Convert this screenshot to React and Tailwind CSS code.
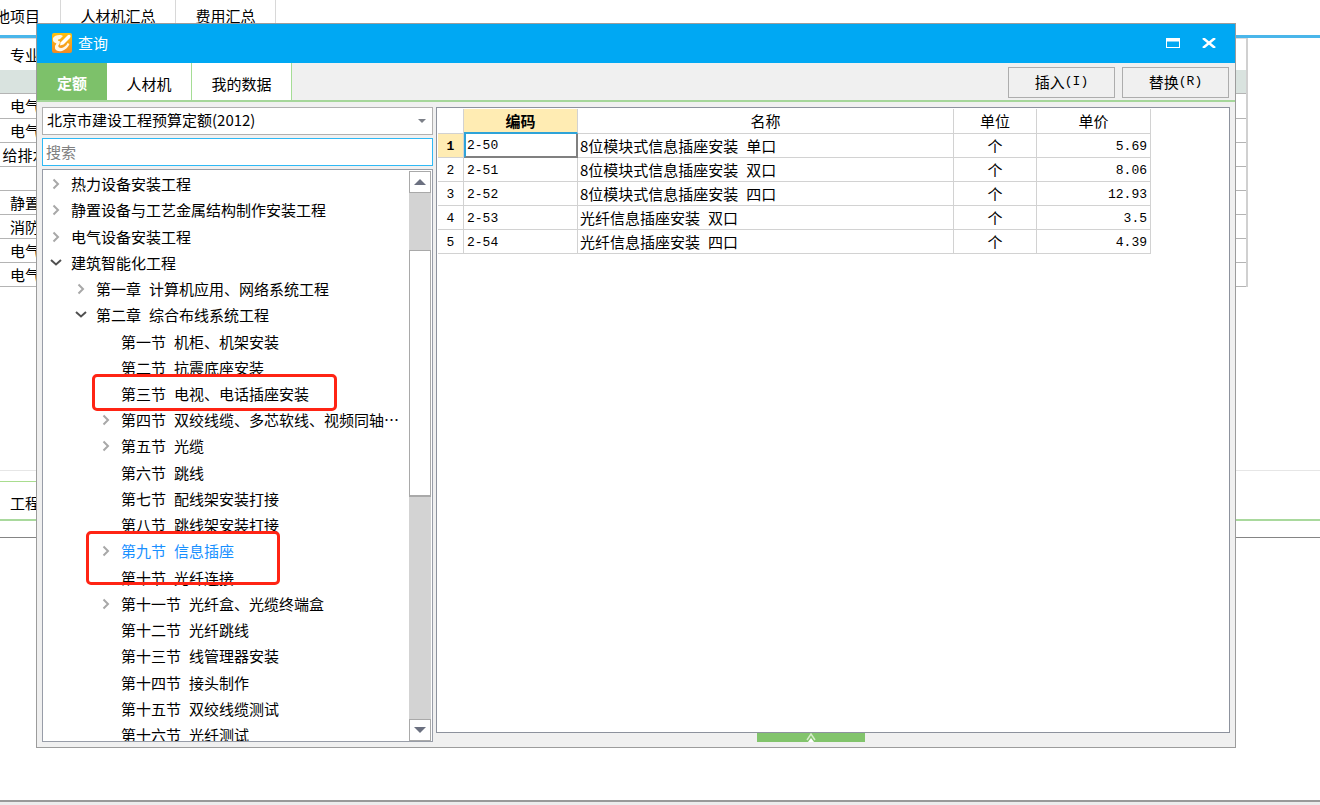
import { useState } from 'react';
import clsx from 'clsx';

const sheetTabs = [
  { name: '其他项目', width: 'w-[61px] justify-end pr-5' },
  { name: '人材机汇总', width: 'w-[115px] justify-center' },
  { name: '费用汇总', width: 'w-[100px] justify-center' },
];

const majors = ['电气', '电气', '给排水', '', '静置', '消防', '电气', '电气'];

const treeItems = [
  { level: 0, icon: 'closed', title: '热力设备安装工程' },
  { level: 0, icon: 'closed', title: '静置设备与工艺金属结构制作安装工程' },
  { level: 0, icon: 'closed', title: '电气设备安装工程' },
  { level: 0, icon: 'open', title: '建筑智能化工程' },
  { level: 1, icon: 'closed', no: '第一章', title: '计算机应用、网络系统工程' },
  { level: 1, icon: 'open', no: '第二章', title: '综合布线系统工程' },
  { level: 2, no: '第一节', title: '机柜、机架安装' },
  { level: 2, no: '第二节', title: '抗震底座安装' },
  { level: 2, no: '第三节', title: '电视、电话插座安装' },
  { level: 2, icon: 'closed', no: '第四节', title: '双绞线缆、多芯软线、视频同轴…' },
  { level: 2, icon: 'closed', no: '第五节', title: '光缆' },
  { level: 2, no: '第六节', title: '跳线' },
  { level: 2, no: '第七节', title: '配线架安装打接' },
  { level: 2, no: '第八节', title: '跳线架安装打接' },
  { level: 2, icon: 'closed', no: '第九节', title: '信息插座' },
  { level: 2, no: '第十节', title: '光纤连接' },
  { level: 2, icon: 'closed', no: '第十一节', title: '光纤盒、光缆终端盒' },
  { level: 2, no: '第十二节', title: '光纤跳线' },
  { level: 2, no: '第十三节', title: '线管理器安装' },
  { level: 2, no: '第十四节', title: '接头制作' },
  { level: 2, no: '第十五节', title: '双绞线缆测试' },
  { level: 2, no: '第十六节', title: '光纤测试' },
];

const quotas = [
  { code: '2-50', name: '8位模块式信息插座安装', spec: '单口', unit: '个', price: '5.69' },
  { code: '2-51', name: '8位模块式信息插座安装', spec: '双口', unit: '个', price: '8.06' },
  { code: '2-52', name: '8位模块式信息插座安装', spec: '四口', unit: '个', price: '12.93' },
  { code: '2-53', name: '光纤信息插座安装', spec: '双口', unit: '个', price: '3.5' },
  { code: '2-54', name: '光纤信息插座安装', spec: '四口', unit: '个', price: '4.39' },
];

const indents = ['pl-[7px]', 'pl-8', 'pl-[57px]'];

function Chevron({ state }) {
  if (!state) return <span className="w-[10px] shrink-0" />;
  const open = state === 'open';
  return (
    <svg
      width="10"
      height="10"
      viewBox="0 0 10 10"
      fill="none"
      strokeWidth="2"
      className={clsx('shrink-0 overflow-visible', open ? 'stroke-[#505050]' : 'stroke-[#a8a8a8]')}
    >
      <path d={open ? 'M0 2 L5 6.5 L10 2' : 'M2.5 0.5 L7 5 L2.5 9.5'} />
    </svg>
  );
}

function Logo() {
  return (
    <svg width="20" height="20" viewBox="0 0 20 20" className="shrink-0">
      <defs>
        <linearGradient id="logo" x1="0" y1="0" x2="0" y2="1">
          <stop offset="0" stopColor="#ffc20e" />
          <stop offset="1" stopColor="#f08a24" />
        </linearGradient>
      </defs>
      <rect width="20" height="20" rx="2" fill="url(#logo)" />
      <path d="M1 5 Q3 1.500 9 2 L11 3 L8 6 Q5.500 6 6 7.500 Q7 8.500 8 8 L7.500 11 Q5.500 12.500 6.500 14 Q9 16 12 14 Q15 12.500 15.500 10 L17.500 11 Q15.500 16 10 18 Q4.500 19 3 15.500 Q2.500 12.500 4.500 10.500 Q0 9 1 5Z" fill="#fff6e6" />
      <path d="M8.500 9.500 L15.500 2.500 Q17 1 18.500 2.500 Q19 4 17.500 5.500 L11.500 11.500 L8 12.500Z" fill="#fff" />
    </svg>
  );
}

function Workspace() {
  return (
    <div className="flex-1 flex flex-col">
      <nav className="flex h-[35px] overflow-hidden">
        {sheetTabs.map(tab => (
          <button
            key={tab.name}
            className={clsx('flex items-center shrink-0 whitespace-nowrap border-r border-[#d8d8d8] pb-1', tab.width)}
          >
            {tab.name}
          </button>
        ))}
      </nav>
      <div className="h-[3px] bg-[#4ab6ea]" />
      <div className="h-[433px] border-b border-[#e6e6e6] pr-[72px]">
        <table className="w-full table-fixed border-separate border-spacing-0 border-r-2 border-[#d0d0d0]">
          <colgroup>
            <col className="w-[50px]" />
            <col />
          </colgroup>
          <thead>
            <tr className="h-8">
              <th className="p-0 font-normal border-t border-[#dcdcdc]">专业</th>
              <th className="p-0 border-t border-[#dcdcdc]" />
            </tr>
          </thead>
          <tbody>
            <tr className="h-6 bg-[#d9e3df]">
              <td className="p-0 border-b border-[#b4b4b4]" />
              <td className="p-0 border-b border-[#b4b4b4]" />
            </tr>
            {majors.map((major, i) => (
              <tr key={i} className={i === 0 ? 'h-[25px]' : 'h-6'}>
                <td className="p-0 border-b border-[#b4b4b4] text-center">{major}</td>
                <td className="p-0 border-b border-[#b4b4b4]" />
              </tr>
            ))}
          </tbody>
        </table>
      </div>
      <div className="flex h-[50px] items-end border-b-2 border-[#a9d99d]">
        <button className="w-24 h-[38px] border-t border-[#a9dd8f] pl-[10px] pt-1 text-left">工程</button>
      </div>
      <div className="flex-1 mt-4 border-t border-[#858585]" />
      <div className="h-[5px] border-t-2 border-[#999] bg-[#ececec]" />
    </div>
  );
}

function TitleBar() {
  return (
    <header className="h-[39px] shrink-0 flex items-center bg-[#00a8f3] pl-[15px] pr-[19px] pb-px text-white">
      <Logo />
      <h1 className="ml-[6px]">查询</h1>
      <button aria-label="最大化" className="ml-auto">
        <svg width="14" height="10" viewBox="0 0 14 10">
          <path d="M0 0H14V10H0Z M1 3.500V9H13V3.500Z" fill="#fff" fillRule="evenodd" />
        </svg>
      </button>
      <button aria-label="关闭" className="ml-[22px]">
        <svg width="14" height="10" viewBox="0 0 14 10" stroke="#fff" strokeWidth="2.500">
          <path d="M1 0 L13 10 M13 0 L1 10" />
        </svg>
      </button>
    </header>
  );
}

function ActionButton({ label, hotkey }) {
  return (
    <button className="w-[107px] h-[31px] flex items-center justify-center border border-[#adadad] bg-[#f0f0f0]">
      {label}
      <span className="font-['Liberation_Mono',monospace] text-[13px]">({hotkey})</span>
    </button>
  );
}

function TabBar() {
  return (
    <div className="h-[39px] shrink-0 flex border-b-2 border-[#a5d69a]">
      <button className="w-[70px] pt-[2px] bg-[#7dc16a] text-white font-bold">定额</button>
      <button className="w-[85px] pt-1 bg-white border-r border-[#a5dd95]">人材机</button>
      <button className="w-[100px] pt-1 bg-white border-r border-[#a5dd95]">我的数据</button>
      <div className="ml-auto mr-[6px] flex items-center gap-[7px] pt-px">
        <ActionButton label="插入" hotkey="I" />
        <ActionButton label="替换" hotkey="R" />
      </div>
    </div>
  );
}

function ScrollBar() {
  return (
    <div className="w-[22px] shrink-0 flex flex-col bg-[#d3d3d3]">
      <button aria-label="向上" className="h-[22px] flex items-center justify-center bg-white border border-[#a9a9a9]">
        <svg width="12" height="6" viewBox="0 0 12 6"><path d="M0 6 L6 0 L12 6Z" fill="#6b7080" /></svg>
      </button>
      <div className="mt-[57px] h-[247px] bg-white border border-b-2 border-[#a9a9a9]" />
      <button aria-label="向下" className="mt-auto h-[22px] flex items-center justify-center bg-white border border-[#a9a9a9]">
        <svg width="12" height="6" viewBox="0 0 12 6"><path d="M0 0 L6 6 L12 0Z" fill="#6b7080" /></svg>
      </button>
    </div>
  );
}

function QuotaTree() {
  const [selected, setSelected] = useState('第九节');

  return (
    <div className="flex-1 min-h-0 flex border border-[#989da8] p-px pb-0 bg-white">
      <div className="relative flex-1 min-w-0 overflow-hidden">
        <ul className="h-[577px] flex flex-col">
          {treeItems.map(item => (
            <li key={item.title} className="flex-1 flex">
              <button
                onClick={() => setSelected(item.no)}
                className={clsx(
                  'w-full flex items-center whitespace-nowrap',
                  indents[item.level],
                  item.no && item.no === selected && 'text-[#1890ff]'
                )}
              >
                <Chevron state={item.icon} />
                <span className="ml-[10px] flex gap-2">
                  {item.no && <span>{item.no}</span>}
                  <span>{item.title}</span>
                </span>
              </button>
            </li>
          ))}
        </ul>
        {/* highlight marks */}
        <div className="absolute left-[48px] top-[203px] w-[245px] h-[37px] border-[3px] border-[#ff2414] rounded-[5px] pointer-events-none" />
        <div className="absolute left-[42px] top-[360px] w-[194px] h-[54px] border-[3px] border-[#ff2414] rounded-[5px] pointer-events-none" />
      </div>
      <ScrollBar />
    </div>
  );
}

function QuotaTable() {
  const cell = 'p-0 border-r border-b border-[#d2d2d2]';
  const mono = "font-['Liberation_Mono',monospace] text-[13px] pt-[2px]";
  return (
    <table className="w-[713px] table-fixed border-separate border-spacing-0">
      <colgroup>
        <col className="w-[26px]" />
        <col className="w-[114px]" />
        <col className="w-[376px]" />
        <col className="w-[83px]" />
        <col className="w-[114px]" />
      </colgroup>
      <thead>
        <tr className="h-[25px]">
          <th className={cell} />
          <th className="p-0 bg-[#ffecb3] border-r border-r-[#d2d2d2] border-b-2 border-b-[#2ea3d8] font-bold">编码</th>
          <th className={clsx(cell, 'font-normal')}>名称</th>
          <th className={clsx(cell, 'font-normal')}>单位</th>
          <th className={clsx(cell, 'font-normal')}>单价</th>
        </tr>
      </thead>
      <tbody>
        {quotas.map((q, i) => (
          <tr key={q.code} className="h-6">
            <td className={clsx(cell, mono, 'text-center', i === 0 && 'bg-[#ffecb3] font-bold')}>{i + 1}</td>
            <td
              className={clsx(
                mono,
                i === 0
                  ? 'p-0 pl-px border-l-2 border-l-[#2ea3d8] border-r-2 border-b-2 border-r-[#808080] border-b-[#808080]'
                  : [cell, 'pl-[3px]']
              )}
            >
              {q.code}
            </td>
            <td className={cell}>
              <div className="flex gap-2 pl-[2px]">
                <span>{q.name}</span>
                <span>{q.spec}</span>
              </div>
            </td>
            <td className={clsx(cell, 'text-center')}>{q.unit}</td>
            <td className={clsx(cell, mono, 'text-right pr-[3px]')}>{q.price}</td>
          </tr>
        ))}
      </tbody>
    </table>
  );
}

function QueryDialog() {
  return (
    <section className="flex-1 flex flex-col border border-[#9c9c9c] bg-[#f0f0f0]">
      <TitleBar />
      <TabBar />
      <div className="flex-1 min-h-0 flex gap-[3px] p-[5px]">
        <div className="w-[391px] shrink-0 flex flex-col gap-[3px]">
          <div className="relative">
            <select
              aria-label="定额库"
              className="block w-full h-7 appearance-none border border-[#b0b0b0] bg-white pl-1 pb-[2px]"
            >
              <option>北京市建设工程预算定额(2012)</option>
            </select>
            <svg width="8" height="4" viewBox="0 0 8 4" className="absolute right-[7px] top-3 pointer-events-none">
              <path d="M0 0 L4 4 L8 0Z" fill="#7c8088" />
            </svg>
          </div>
          <input
            type="text"
            aria-label="搜索"
            placeholder="搜索"
            className="block w-full h-7 border border-[#2fb9f5] bg-white pl-[3px] pb-px placeholder:text-[#808080]"
          />
          <QuotaTree />
        </div>
        <div className="flex-1 min-w-0 flex flex-col">
          <div className="flex-1 border border-[#8d929d] p-px bg-white">
            <QuotaTable />
          </div>
          <div className="flex justify-center pr-[45px]">
            <button aria-label="展开" className="w-[108px] h-[9px] flex justify-center bg-[#82c46c]">
              <svg width="10" height="9" viewBox="0 0 10 9" fill="none">
                <path d="M1 7 L5 1 L9 7" stroke="#d5ecca" strokeWidth="1.500" />
                <path d="M2 9 L5 5 L8 9Z" fill="#fff" />
              </svg>
            </button>
          </div>
        </div>
      </div>
    </section>
  );
}

export default function App() {
  return (
    <div className="relative min-h-screen flex flex-col bg-white text-black text-[15px] leading-[20px] font-['Noto_Sans_CJK_SC',sans-serif]">
      <Workspace />
      <div className="absolute inset-0 flex pt-[23px] pl-9 pr-[84px] pb-[57px]">
        <QueryDialog />
      </div>
    </div>
  );
}
